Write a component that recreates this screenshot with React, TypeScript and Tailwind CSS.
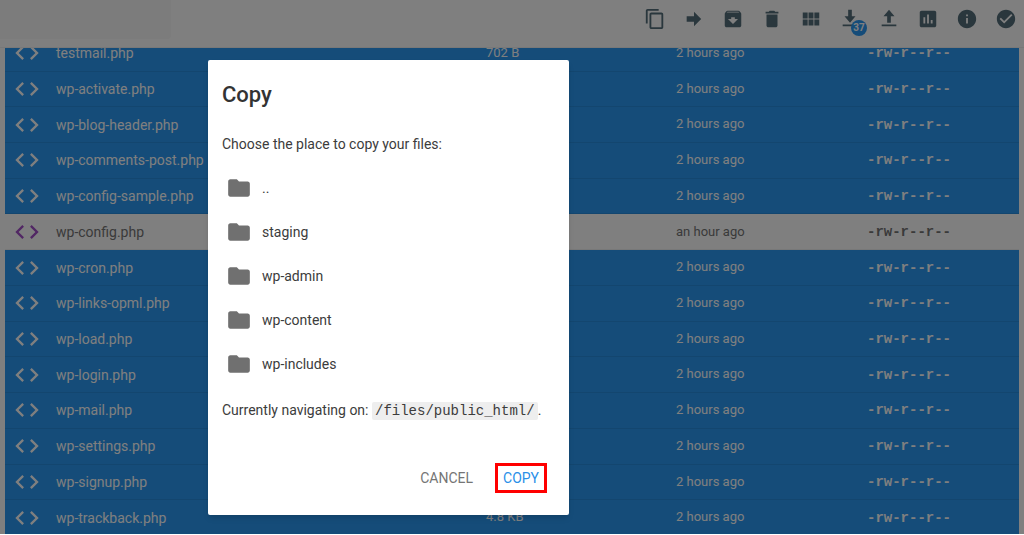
import React from 'react';
import {
  MdArchive,
  MdAssessment,
  MdCheckCircle,
  MdCode,
  MdContentCopy,
  MdDelete,
  MdFolder,
  MdInfo,
  MdViewModule,
} from 'react-icons/md';

interface FileRow {
  name: string;
  size?: string;
  modified: string;
  selected: boolean;
}

const files: FileRow[] = [
  { name: 'testmail.php', size: '702 B', modified: '2 hours ago', selected: true },
  { name: 'wp-activate.php', modified: '2 hours ago', selected: true },
  { name: 'wp-blog-header.php', modified: '2 hours ago', selected: true },
  { name: 'wp-comments-post.php', modified: '2 hours ago', selected: true },
  { name: 'wp-config-sample.php', modified: '2 hours ago', selected: true },
  { name: 'wp-config.php', modified: 'an hour ago', selected: false },
  { name: 'wp-cron.php', modified: '2 hours ago', selected: true },
  { name: 'wp-links-opml.php', modified: '2 hours ago', selected: true },
  { name: 'wp-load.php', modified: '2 hours ago', selected: true },
  { name: 'wp-login.php', modified: '2 hours ago', selected: true },
  { name: 'wp-mail.php', modified: '2 hours ago', selected: true },
  { name: 'wp-settings.php', modified: '2 hours ago', selected: true },
  { name: 'wp-signup.php', modified: '2 hours ago', selected: true },
  { name: 'wp-trackback.php', size: '4.8 KB', modified: '2 hours ago', selected: true },
];

const folders = ['..', 'staging', 'wp-admin', 'wp-content', 'wp-includes'];

const PathIcon = ({ d }: { d: string }) => (
  <svg viewBox="0 0 24 24" width={22} height={22} fill="currentColor" aria-hidden="true">
    <path d={d} />
  </svg>
);

const tools = [
  { label: 'Copy', icon: <MdContentCopy size={22} /> },
  { label: 'Move', icon: <PathIcon d="M4 15V9h8V4.16L19.84 12 12 19.84V15H4z" /> },
  { label: 'Archive', icon: <MdArchive size={22} /> },
  { label: 'Delete', icon: <MdDelete size={22} /> },
  { label: 'View', icon: <MdViewModule size={22} /> },
  { label: 'Download', icon: <PathIcon d="M18 9h-4V2h-4v7H6l6 7 6-7zM4 18v2h15v-2H4z" />, badge: 37 },
  { label: 'Upload', icon: <PathIcon d="M10 16h4V9h4l-6-7-6 7h4v7zm-6 2h16v2H4v-2z" /> },
  { label: 'Usage', icon: <MdAssessment size={22} /> },
  { label: 'Info', icon: <MdInfo size={22} /> },
  { label: 'Select all', icon: <MdCheckCircle size={22} /> },
];

const Toolbar = () => (
  <header className="flex h-12 shrink-0 justify-between border-b border-[#f0f0f0] pr-[7px]">
    <div className="h-[39px] w-[171px] rounded-br-sm bg-[#f8f8f8]" />
    <div className="flex h-[37px] items-center gap-[17px] text-[#546e7a]">
      {tools.map((tool) => (
        <button key={tool.label} type="button" aria-label={tool.label} className="relative">
          {tool.icon}
          {tool.badge && (
            <span className="absolute top-3 left-3 flex size-4 items-center justify-center rounded-full bg-[#2a98f2] text-[10px] leading-4 font-bold text-white">
              {tool.badge}
            </span>
          )}
        </button>
      ))}
    </div>
  </header>
);

const FileTable = () => (
  <div className="min-h-0 flex-1 overflow-hidden pr-[5px] pl-[5px]">
    <table className="-mt-3 h-[500px] w-full table-fixed border-collapse text-left text-sm">
      <colgroup>
        <col className="w-[51px]" />
        <col />
        <col className="w-[190px]" />
        <col className="w-[191px]" />
        <col className="w-[152px]" />
      </colgroup>
      <tbody>
        {files.map((file) => (
          <tr
            key={file.name}
            className={
              file.selected
                ? 'border-b border-[#268cdf] bg-[#2a98f2] text-white'
                : 'border-b border-[#f0f0f0] bg-white text-[#757575]'
            }
          >
            <td className="pl-2">
              <MdCode size={28} className={file.selected ? 'text-white' : 'text-[#a24fc8]'} />
            </td>
            <td>{file.name}</td>
            <td className="text-[13px]">{file.size}</td>
            <td className="text-[13px]">{file.modified}</td>
            <td className="font-['Liberation_Mono',monospace] font-bold">-rw-r--r--</td>
          </tr>
        ))}
      </tbody>
    </table>
  </div>
);

const CopyDialog = () => (
  <div
    role="dialog"
    aria-modal="true"
    aria-labelledby="copy-title"
    className="mt-[60px] ml-[208px] w-[361px] rounded-xs bg-white px-[14px] pt-[21px] pb-[22px] text-sm text-[#3c3c3c] shadow-md"
  >
    <h2 id="copy-title" className="text-[22px] leading-7 font-medium text-[#333333]">
      Copy
    </h2>
    <p className="mt-[23px] leading-6">Choose the place to copy your files:</p>
    <ul className="mt-[10px]">
      {folders.map((folder) => (
        <li key={folder}>
          <button type="button" className="flex h-11 w-full items-center gap-[10px] pl-1 text-left">
            <MdFolder size={26} className="text-[#707070]" />
            {folder}
          </button>
        </li>
      ))}
    </ul>
    <p className="mt-3 leading-6">
      Currently navigating on:{' '}
      <code className="rounded-xs bg-[#eeeeee] px-[3px] py-px font-['Liberation_Mono',monospace]">
        /files/public_html/
      </code>
      .
    </p>
    <div className="mt-10 flex items-center justify-end gap-[14px] pr-2">
      <button type="button" className="px-2 text-[#757575]">
        CANCEL
      </button>
      <button type="button" className="h-[30px] border-3 border-[#ff0000] px-[5px] text-[#2a90e8]">
        COPY
      </button>
    </div>
  </div>
);

const App: React.FC = () => (
  <div className="relative h-screen overflow-hidden bg-white pb-px font-[Roboto,sans-serif]">
    <main className="flex h-full flex-col bg-white">
      <Toolbar />
      <FileTable />
    </main>
    <div className="absolute inset-0 bottom-px flex items-start bg-black/50">
      <CopyDialog />
    </div>
  </div>
);

export default App;
